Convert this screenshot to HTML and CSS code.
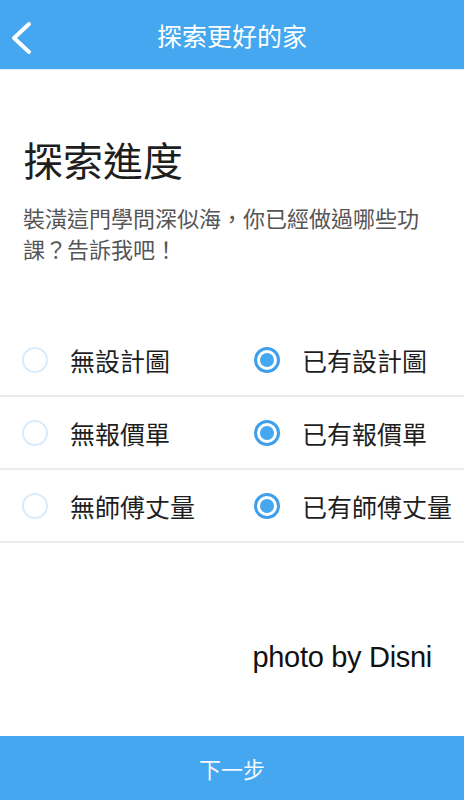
FILE: index.html
```html
<!DOCTYPE html>
<html lang="zh-Hant">
<head>
    <meta charset="UTF-8">
    <meta name="viewport" content="width=device-width, initial-scale=1.0">
    <title>探索更好的家</title>
    <link rel="stylesheet" href="styles.css">
</head>
<body>
    <div class="app">
        <header class="topbar">
            <a class="back" href="#" aria-label="返回">
                <svg width="44" height="70" viewBox="0 0 44 70">
                    <polyline points="29,24 14,38 29,52" fill="none" stroke="#fff" stroke-width="4" stroke-linecap="round" stroke-linejoin="round"/>
                </svg>
            </a>
            <h1 class="topbar-title">探索更好的家</h1>
            <span class="spacer"></span>
        </header>

        <main class="content">
            <div class="intro">
                <h2 class="title">探索進度</h2>
                <p class="desc">裝潢這門學問深似海，你已經做過哪些功課？告訴我吧！</p>
            </div>

            <div class="options">
                <div class="row">
                    <label class="option"><span class="radio"></span><span class="label">無設計圖</span></label>
                    <label class="option"><span class="radio checked"></span><span class="label">已有設計圖</span></label>
                </div>
                <div class="row">
                    <label class="option"><span class="radio"></span><span class="label">無報價單</span></label>
                    <label class="option"><span class="radio checked"></span><span class="label">已有報價單</span></label>
                </div>
                <div class="row">
                    <label class="option"><span class="radio"></span><span class="label">無師傅丈量</span></label>
                    <label class="option"><span class="radio checked"></span><span class="label">已有師傅丈量</span></label>
                </div>
            </div>

            <div class="credit">photo by Disni</div>
        </main>

        <footer class="next">下一步</footer>
    </div>
</body>
</html>
```

FILE: styles.css
```css
body {
    margin: 0;
    padding: 0;
    font-family: "Noto Sans CJK TC", "Noto Sans", sans-serif;
    background-color: #ffffff;
    color: #222;
}

.app {
    width: 464px;
    height: 800px;
    display: flex;
    flex-direction: column;
}

.topbar {
    height: 70px;
    background-color: #44a7f0;
    display: grid;
    grid-template-columns: 56px 1fr 56px;
    align-items: center;
    border-bottom: 1px solid #e2eef8;
    box-sizing: border-box;
}

.back {
    display: flex;
    height: 70px;
}

.topbar-title {
    margin: 0;
    text-align: center;
    color: #ffffff;
    font-size: 25px;
    font-weight: normal;
    line-height: 70px;
}

.content {
    flex: 1;
    display: flex;
    flex-direction: column;
}

.intro {
    padding: 0 24px 0 23px;
}

.title {
    margin: 66px 0 0;
    font-size: 40px;
    line-height: 46px;
    font-weight: normal;
    color: #1e1e1e;
}

.desc {
    margin: 20px 0 0;
    font-size: 22px;
    line-height: 31px;
    color: #555555;
}

.options {
    margin-top: 60px;
}

.row {
    height: 71px;
    display: grid;
    grid-template-columns: 1fr 1fr;
    border-bottom: 2px solid #ececec;
}

.option {
    display: flex;
    align-items: center;
    gap: 22px;
    padding-left: 22px;
}

.radio {
    width: 26px;
    height: 26px;
    box-sizing: border-box;
    border-radius: 50%;
    border: 2px solid #d9ebfa;
    display: flex;
    align-items: center;
    justify-content: center;
}

.radio.checked {
    border: 3px solid #3f9fea;
}

.radio.checked::after {
    content: "";
    width: 14px;
    height: 14px;
    border-radius: 50%;
    background-color: #44a7f0;
}

.label {
    font-size: 25px;
    color: #1e1e1e;
}

.credit {
    margin-top: 97px;
    padding-right: 32px;
    text-align: right;
    font-family: "Liberation Sans", Arial, sans-serif;
    font-size: 29px;
    line-height: 34px;
    letter-spacing: -0.3px;
    color: #111111;
    text-shadow: 1px 1px 0 #ffffff, -1px 0 0 #ffffff;
}

.next {
    height: 64px;
    background-color: #44a7f0;
    color: #f2f8fe;
    font-size: 22px;
    display: flex;
    align-items: center;
    justify-content: center;
}
```
